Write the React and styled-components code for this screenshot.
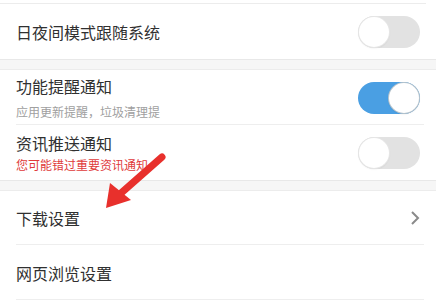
import React from "react";
import styled, { createGlobalStyle } from "styled-components";

const Global = createGlobalStyle`
  html, body { margin: 0; padding: 0; background: #fff; }
  body { font-family: "Noto Sans CJK SC", "Noto Sans", sans-serif; overflow: hidden; }
`;

const Page = styled.div`
  position: relative;
  width: 436px;
  height: 303px;
  overflow: hidden;
  background: #fff;
`;

const TopEdge = styled.div`
  height: 3px;
  margin: 0 10px 0 0;
  border-bottom: 1px solid #ececec;
`;

const Band = styled.div`
  height: ${(p) => p.h}px;
  background: #f6f6f6;
  border-top: 1px solid #e8e8e8;
  border-bottom: 1px solid #ececec;
  box-sizing: border-box;
`;

const Row = styled.div`
  position: relative;
  display: flex;
  align-items: center;
  justify-content: space-between;
  height: ${(p) => p.h}px;
  padding: 0 16px;
  box-sizing: border-box;
  &::after {
    content: "";
    display: ${(p) => (p.divider ? "block" : "none")};
    position: absolute;
    left: 16px;
    right: 12px;
    bottom: 0;
    height: 1px;
    background: #eeeeee;
  }
`;

const TextCol = styled.div`
  display: flex;
  flex-direction: column;
  gap: ${(p) => p.gap || 0}px;
`;

const Title = styled.div`
  font-size: 16px;
  line-height: 20px;
  color: #303030;
`;

const Sub = styled.div`
  font-size: 12px;
  line-height: 16px;
  color: ${(p) => (p.warn ? "#e03a3a" : "#a0a0a0")};
`;

const Toggle = styled.div`
  width: 62px;
  height: 32px;
  border-radius: 16px;
  background: ${(p) => (p.on ? "#4a9fe3" : "#e2e2e2")};
  position: relative;
  flex: none;
`;

const Knob = styled.div`
  position: absolute;
  top: 1px;
  left: ${(p) => (p.on ? "31px" : "1px")};
  width: 30px;
  height: 30px;
  border-radius: 50%;
  background: #fff;
  box-shadow: 0 0 0 1px ${(p) => (p.on ? "#b8c4cc" : "#e6e6e6")}, 0 1px 2px rgba(0,0,0,0.12);
`;

const Chevron = styled.svg`
  width: 12px;
  height: 16px;
  margin-right: -1px;
`;

const Arrow = styled.svg`
  position: absolute;
  left: 0;
  top: 0;
  pointer-events: none;
`;

const Switch = ({ on }) => (
  <Toggle on={on}>
    <Knob on={on} />
  </Toggle>
);

export default function App() {
  return (
    <>
      <Global />
      <Page>
        <TopEdge />
        <Row h={55}>
          <Title>日夜间模式跟随系统</Title>
          <Switch />
        </Row>
        <Band h={11} />
        <Row h={55} divider>
          <TextCol gap={8}>
            <Title>功能提醒通知</Title>
            <Sub>应用更新提醒，垃圾清理提</Sub>
          </TextCol>
          <Switch on />
        </Row>
        <Row h={55}>
          <TextCol gap={4}>
            <Title>资讯推送通知</Title>
            <Sub warn>您可能错过重要资讯通知</Sub>
          </TextCol>
          <Switch />
        </Row>
        <Band h={11} />
        <Row h={54} divider>
          <Title>下载设置</Title>
          <Chevron viewBox="0 0 12 16">
            <path d="M3 2 L9 8 L3 14" fill="none" stroke="#8a8a8a" strokeWidth="2" />
          </Chevron>
        </Row>
        <Row h={55} divider>
          <Title>网页浏览设置</Title>
        </Row>
        <Arrow width="436" height="303" viewBox="0 0 436 303">
          <path d="M162 157 L120 194" stroke="#e8302c" strokeWidth="7" strokeLinecap="round" />
          <polygon points="106,208 110,183 131,200" fill="#e8302c" />
        </Arrow>
      </Page>
    </>
  );
}
